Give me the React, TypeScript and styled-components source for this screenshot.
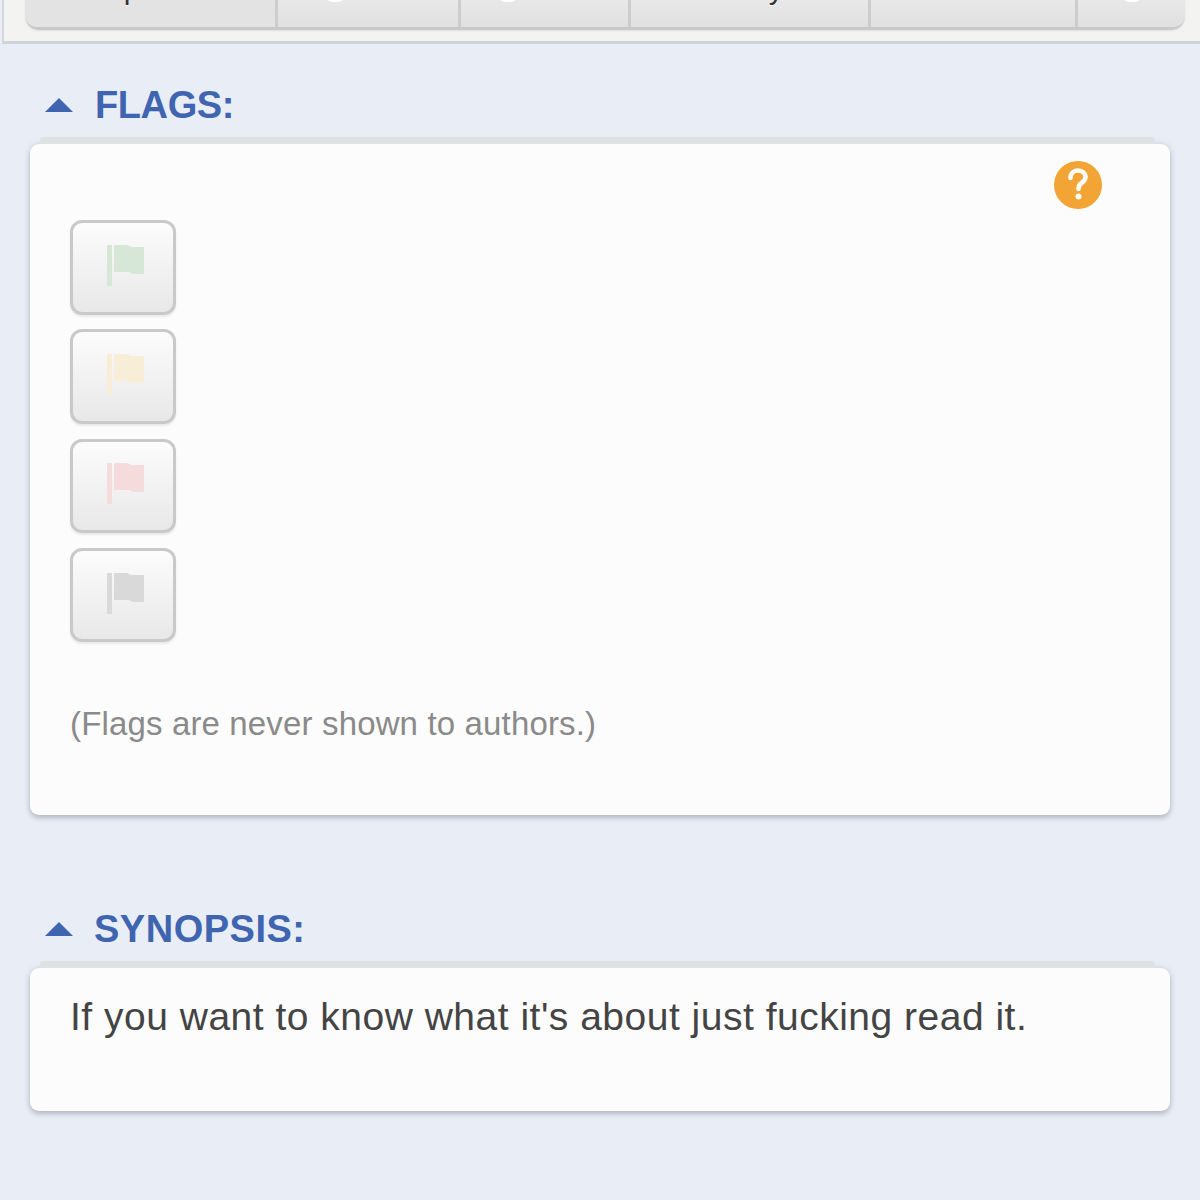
import React from 'react';
import styled, { createGlobalStyle } from 'styled-components';

const GlobalStyle = createGlobalStyle`
  html, body {
    margin: 0;
    padding: 0;
    height: 1200px;
    overflow: hidden;
    background: #e8edf6;
    font-family: "Liberation Sans", Arial, sans-serif;
  }
`;

const Page = styled.div`
  width: 1200px;
  height: 1200px;
  overflow: hidden;
  background: #e8edf6;
`;

const TabPanel = styled.div`
  box-sizing: border-box;
  height: 44px;
  margin-left: 2px;
  padding: 0 15px 0 21px;
  display: flex;
  align-items: flex-end;
  overflow: hidden;
  background: #f3f3f1;
  border-left: 2px solid #d4d7dc;
  border-bottom: 3px solid #cfd3da;
`;

const TabBar = styled.div`
  display: flex;
  width: 100%;
  height: 70px;
  margin-bottom: 11px;
  flex-shrink: 0;
  border-radius: 0 0 14px 14px;
  overflow: hidden;
  border-bottom: 3px solid #c9c9c9;
  box-shadow: 0 1px 2px rgba(0, 0, 0, 0.08);
`;

const Tab = styled.div<{ $width: number; $active?: boolean; $shift?: number }>`
  position: relative;
  box-sizing: border-box;
  width: ${(props) => props.$width}px;
  flex-shrink: 0;
  padding-top: 12px;
  padding-left: ${(props) => Math.max(props.$shift ?? 0, 0)}px;
  padding-right: ${(props) => Math.max(-(props.$shift ?? 0), 0)}px;
  text-align: center;
  font-size: 30px;
  line-height: 40px;
  color: #333;
  text-shadow: 0 1px 0 #fff;
  border-left: ${(props) => (props.$active ? 'none' : '3px solid #cdcdcd')};
  background: ${(props) =>
    props.$active ? '#e3e3e3' : 'linear-gradient(180deg, #f6f6f6 0%, #e0e0e0 100%)'};
`;

const TabGlint = styled.span<{ $left: number }>`
  position: absolute;
  top: 41px;
  left: ${(props) => props.$left}px;
  width: 14px;
  height: 4px;
  border-radius: 50%;
  background: #fff;
`;

const Section = styled.section`
  padding: 0 30px;
`;

const SectionHead = styled.div<{ $top: number; $gap: number }>`
  display: flex;
  align-items: center;
  gap: ${(props) => props.$gap}px;
  margin-top: ${(props) => props.$top}px;
  margin-left: 15px;
  height: 46px;
`;

const Triangle = styled.div`
  width: 0;
  height: 0;
  border-left: 14px solid transparent;
  border-right: 14px solid transparent;
  border-bottom: 14px solid #3f64b0;
`;

const SectionTitle = styled.h2<{ $tracking: number }>`
  margin: 0;
  font-size: 38px;
  line-height: 46px;
  font-weight: 700;
  letter-spacing: ${(props) => props.$tracking}px;
  color: #3f64b0;
`;

const Card = styled.div<{ $height: number }>`
  position: relative;
  box-sizing: border-box;
  height: ${(props) => props.$height}px;
  margin-top: 16px;
  background: #fcfcfc;
  border-radius: 9px;
  box-shadow: 0 3px 5px rgba(120, 125, 140, 0.4), 0 0 6px rgba(120, 125, 140, 0.2);

  &::before {
    content: '';
    position: absolute;
    top: -7px;
    left: 10px;
    right: 15px;
    height: 7px;
    background: #dfe2e3;
    border-radius: 3px 3px 0 0;
  }
`;

const FlagsBody = styled.div`
  padding: 76px 40px 0;
`;

const FlagList = styled.div`
  display: flex;
  flex-direction: column;
  gap: 14.8px;
`;

const FlagButton = styled.button`
  box-sizing: border-box;
  display: flex;
  align-items: center;
  justify-content: center;
  width: 106px;
  height: 94.5px;
  padding: 0 0 4px 6px;
  background: linear-gradient(180deg, #fcfcfc 0%, #e8e8e8 100%);
  border: 3px solid #c9c9c9;
  border-radius: 12px;
  box-shadow: 0 2px 2px rgba(0, 0, 0, 0.08);
`;

const Note = styled.p`
  margin: 62px 0 0;
  font-size: 33px;
  line-height: 40px;
  letter-spacing: 0.15px;
  color: #8a8a8a;
`;

const HelpBadge = styled.svg`
  position: absolute;
  top: 17px;
  right: 68px;
  width: 48px;
  height: 48px;
`;

const SynopsisText = styled.p`
  margin: 0;
  padding: 26px 40px 0;
  font-size: 39px;
  line-height: 46px;
  letter-spacing: 0.5px;
  color: #444;
`;

function FlagIcon({ color }: { color: string }) {
  return (
    <svg width="38" height="41" viewBox="0 0 38 41" aria-hidden="true">
      <rect x="0" y="0" width="5" height="41" fill={color} />
      <path d="M7 0 H20 L24 2 H37 V29 H26 L22 27 H7 Z" fill={color} />
    </svg>
  );
}

function App() {
  return (
    <Page>
      <GlobalStyle />
      <TabPanel>
        <TabBar>
          <Tab $width={250} $active $shift={16}>Updates</Tab>
          <Tab $width={183}><TabGlint $left={50} /></Tab>
          <Tab $width={170}><TabGlint $left={40} /></Tab>
          <Tab $width={240} $shift={-60}>Summary</Tab>
          <Tab $width={207} />
          <Tab $width={110}><TabGlint $left={47} /></Tab>
        </TabBar>
      </TabPanel>

      <Section>
        <SectionHead $top={38} $gap={22}>
          <Triangle />
          <SectionTitle $tracking={-0.4}>FLAGS:</SectionTitle>
        </SectionHead>
        <Card $height={671}>
          <HelpBadge viewBox="0 0 48 48" aria-hidden="true">
            <circle cx="24" cy="24" r="24" fill="#f2a434" />
            <path
              d="M16.5 17 C16.5 12 20 9.5 24.2 9.5 C28.5 9.5 31.5 12.5 31.5 16 C31.5 19 29.5 20.7 27.5 22 C25.5 23.3 24.5 24.5 24.5 28"
              fill="none"
              stroke="#fff"
              strokeWidth="4.5"
              strokeLinecap="round"
            />
            <circle cx="24.5" cy="35.5" r="3" fill="#fff" />
          </HelpBadge>
          <FlagsBody>
            <FlagList>
              <FlagButton><FlagIcon color="#d6e7d8" /></FlagButton>
              <FlagButton><FlagIcon color="#f8edd6" /></FlagButton>
              <FlagButton><FlagIcon color="#f5dbdc" /></FlagButton>
              <FlagButton><FlagIcon color="#d9d9d9" /></FlagButton>
            </FlagList>
            <Note>(Flags are never shown to authors.)</Note>
          </FlagsBody>
        </Card>
      </Section>

      <Section>
        <SectionHead $top={91} $gap={21}>
          <Triangle />
          <SectionTitle $tracking={0.5}>SYNOPSIS:</SectionTitle>
        </SectionHead>
        <Card $height={143}>
          <SynopsisText>If you want to know what it's about just fucking read it.</SynopsisText>
        </Card>
      </Section>
    </Page>
  );
}

export default App;
